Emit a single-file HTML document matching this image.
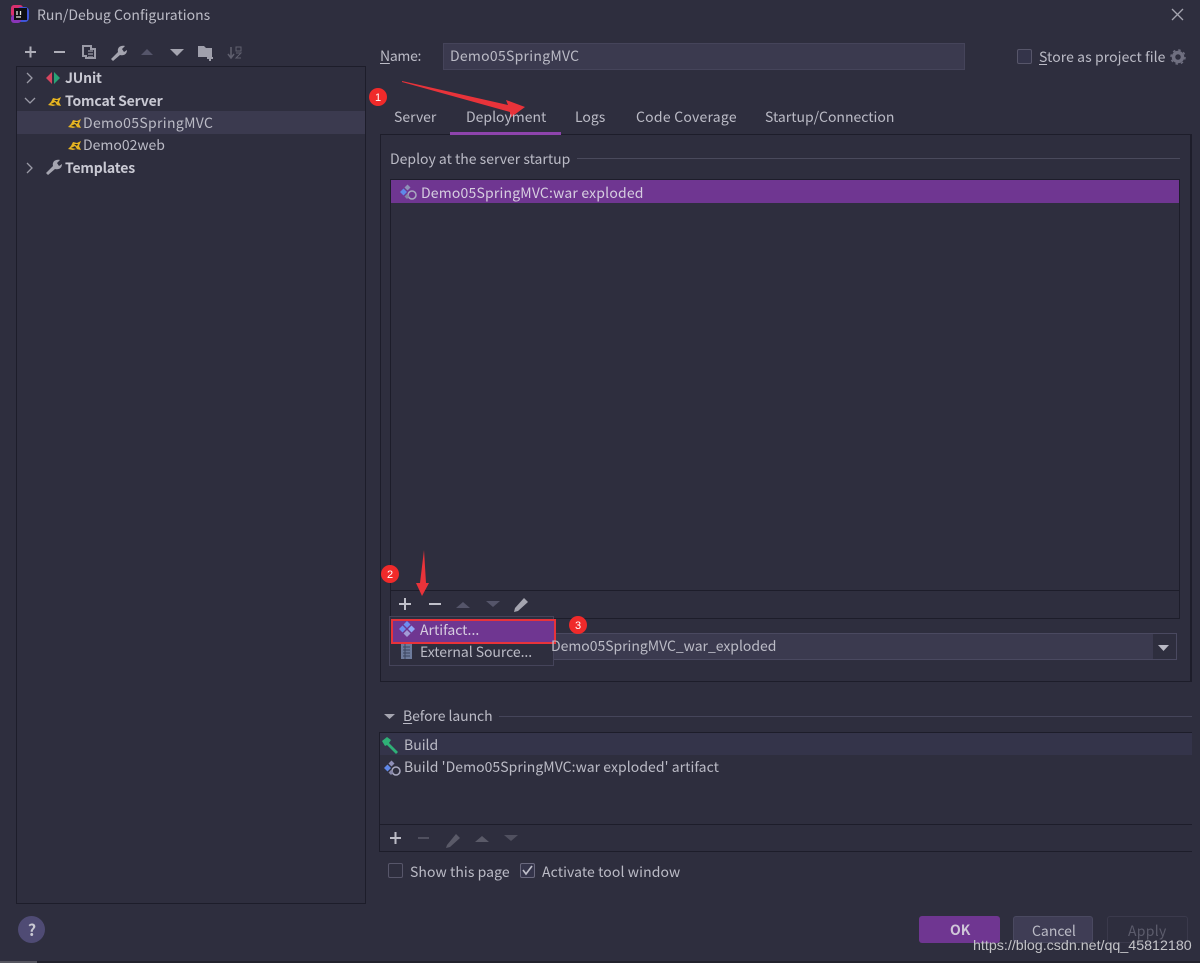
<!DOCTYPE html>
<html><head><meta charset="utf-8"><style>
html,body{margin:0;padding:0;background:#2e2e3e}
#r{position:relative;width:1200px;height:963px;overflow:hidden;background:#2e2e3e;font-family:"Noto Sans CJK SC","Liberation Sans",sans-serif;font-size:14px;color:#bbbbc6;filter:blur(.35px)}
#r div{position:absolute;box-sizing:border-box}
.t{white-space:nowrap;line-height:20px;height:20px}
.b{font-weight:700;color:#c9c9d3;letter-spacing:-.15px}
u{text-underline-offset:2px}
svg{position:absolute;left:0;top:0}
</style></head><body><div id="r">
<div style="left:16px;top:66px;width:350px;height:838px;border:1px solid #1d1d2a"></div>
<div style="left:17px;top:111px;width:348px;height:23px;background:#3b3a4f"></div>
<div style="left:380px;top:134px;width:812px;height:548px;border:1px solid #1d1d2a;border-right:2px solid #1d1d2a"></div>
<div style="left:450px;top:132px;width:111px;height:3px;background:#8e44ad"></div>
<div style="left:443px;top:43px;width:522px;height:27px;background:#3b3a4f;border:1px solid #45445a"></div>
<div style="left:1017px;top:49px;width:15px;height:15px;border:1px solid #57566a;border-radius:2px;background:#34344a"></div>
<div style="left:390px;top:179px;width:790px;height:440px;border:1px solid #1d1d2a"></div>
<div style="left:391px;top:180px;width:788px;height:23px;background:#6f3691"></div>
<div style="left:391px;top:590px;width:788px;height:1px;background:#1d1d2a"></div>
<div style="left:577px;top:158px;width:603px;height:1px;background:#4a4a5c"></div>
<div style="left:540px;top:633px;width:637px;height:27px;background:#3b3a4f;border:1px solid #4a4960"></div>
<div style="left:1153px;top:634px;width:23px;height:25px;background:#2e2e3e"></div>
<div style="left:389px;top:616px;width:165px;height:50px;background:#2e2e3e;border:1px solid #45445a"></div>
<div style="left:391px;top:619px;width:165px;height:25px;background:#6f3691;border:2.500px solid #e8333a"></div>
<div style="left:499px;top:716px;width:693px;height:1px;background:#45455a"></div>
<div style="left:379px;top:732px;width:813px;height:120px;border:1px solid #1d1d2a;border-right:0"></div>
<div style="left:380px;top:733px;width:812px;height:22px;background:#34344a"></div>
<div style="left:380px;top:824px;width:812px;height:1px;background:#1d1d2a"></div>
<div style="left:388px;top:863px;width:15px;height:15px;border:1px solid #57566a;border-radius:2px"></div>
<div style="left:520px;top:863px;width:15px;height:15px;border:1px solid #6a697e;border-radius:2px;background:#34344a"></div>
<div style="left:919px;top:916px;width:81px;height:27px;background:#6f3691;border-radius:3px"></div>
<div style="left:1013px;top:916px;width:80px;height:27px;background:#3f3d55;border:1px solid #4a4960;border-radius:3px"></div>
<div style="left:1107px;top:916px;width:81px;height:27px;border:1px solid #3b3a4c;border-radius:3px"></div>
<div style="left:18px;top:916px;width:27px;height:27px;border-radius:50%;background:#4f4b74"></div>
<div style="left:0;top:961px;width:1200px;height:2px;background:#22222c"></div>
<div style="left:0;top:961px;width:37px;height:2px;background:#55555f"></div>

<svg width="1200" height="963" viewBox="0 0 1200 963">
<defs>
<g id="art"><path d="M0 0l3.500-3.500 3.500 3.500-3.500 3.500z" fill="#5f88e8"/><path d="M4.500-4.500l3-3 3 3-3 3z" fill="#8f8fb8"/><circle cx="12" cy="3" r="4" fill="none" stroke="#a9a9c0" stroke-width="1.500"/><path d="M4.500 4.500l2.500-2.500 2.500 2.500-2.500 2.500z" fill="#8585a8"/></g>
<g id="cat"><path d="M0 8l3-3 2-4 4 1 4-2-2 5 2 4-5-1-3 1z" fill="#e6b422"/><path d="M3 7l6 1-2-3z" fill="#2a2a2a"/><path d="M6 3l4 0-1 2z" fill="#2a2a2a"/></g>
<g id="wr"><path d="M0 13l7-7c-1-4 2-7 7-6l-3 3 2 3 3-2c0 4-3 6-7 5l-7 6z" fill="#a5a5b0"/></g>
</defs>
<!-- app icon -->
<rect x="11" y="5" width="12" height="12" rx="3" fill="#d8306f"/><rect x="17" y="7" width="12" height="15" rx="4" fill="#3f55d8"/><rect x="11" y="15" width="10" height="8" rx="3" fill="#8a35b8"/><rect x="14" y="8" width="13" height="12" fill="#0e0e12"/><path d="M17 11v4M20.500 11v4M16 17h5" stroke="#e4e4e4" stroke-width="1.300"/>
<!-- top toolbar -->
<g stroke="#aeaeb8" stroke-width="2" fill="none"><path d="M25 52h11M30.500 46.500v11M54 52h11"/></g>
<path d="M83 46h8v3h4v9h-9v-2h-3z" fill="none" stroke="#9a9aa6" stroke-width="2"/><path d="M88 51h5M88 54h5M88 57h5" stroke="#9a9aa6" stroke-width="1.200"/>
<use href="#wr" x="111" y="46"/>
<path d="M141 55l6-6 6 6z" fill="#55556a"/><path d="M170 49h14l-7 7z" fill="#a5a5b0"/>
<path d="M198 46h6l2 2h6v9h-14z" fill="#a0a0ac"/><path d="M207 58h6M210 55v6" stroke="#a0a0ac" stroke-width="2"/>
<path d="M231 47v10M228 54l3 4 3-4" stroke="#60606f" fill="none" stroke-width="1.500"/><path d="M236 47h5v4h-5zM236 53h5l-5 5h5" stroke="#60606f" fill="none"/>
<!-- close -->
<path d="M1172 9l11 11M1183 9l-11 11" stroke="#a5a5b0" stroke-width="1.300"/>
<!-- gear -->
<circle cx="1178" cy="57" r="4.500" fill="none" stroke="#6f6f80" stroke-width="3.500"/><circle cx="1178" cy="57" r="7" fill="none" stroke="#6f6f80" stroke-width="1.500" stroke-dasharray="2.500 3"/>
<!-- tree chevrons -->
<g stroke="#9a9aa6" stroke-width="1.300" fill="none"><path d="M27 73l5 5-5 5M25 98l5 5 5-5M27 163l5 5-5 5"/></g>
<path d="M52 72l-6 6 6 6z" fill="#d6455f"/><path d="M54 72l6 6-6 6z" fill="#29a376"/>
<use href="#cat" x="48" y="97"/><use href="#cat" x="68" y="119"/><use href="#cat" x="68" y="141"/>
<use href="#wr" x="46" y="160"/>
<!-- artifact icons -->
<use href="#art" x="400" y="192"/><use href="#art" x="384" y="768"/>
<path d="M399 629l3.500-3.500 3.500 3.500-3.500 3.500z" fill="#6c8df0"/><path d="M403.500 624.500l3.500-3.500 3.500 3.500-3.500 3.500z" fill="#6c8df0"/><path d="M408 629l3.500-3.500 3.500 3.500-3.500 3.500z" fill="#8ea6f5"/><path d="M403.500 633.500l3.500-3.500 3.500 3.500-3.500 3.500z" fill="#a39bd8"/>
<rect x="401" y="644" width="11" height="15" fill="#6d7b9c"/><path d="M405 644v15M403 647h7M403 650h7M403 653h7M403 656h7" stroke="#3c4660"/>
<!-- deploy toolbar -->
<g stroke="#c0c0ca" stroke-width="2" fill="none"><path d="M399 604h12M405 598v12M429 604h12"/></g>
<path d="M456 608l7-6 7 6z" fill="#55556a"/><path d="M486 601h14l-7 6z" fill="#55556a"/>
<path d="M515 608l9-10 4 4-10 9-4 1z" fill="#a5a5b0"/>
<path d="M1158 645h11l-5.500 6z" fill="#b8b8c4"/>
<!-- before launch -->
<path d="M384 714h11l-5.500 5z" fill="#a5a5b0"/>
<path d="M382 741l5-4 4 3-2 3 9 9-2 2-9-9-2 1z" fill="#2fb077"/>
<g stroke="#bcbcc6" stroke-width="2" fill="none"><path d="M390 838h11M395.500 832v12"/></g><path d="M418 838h11" stroke="#50505f" stroke-width="2"/>
<path d="M447 845l9-11 4 4-10 9-4 1z" fill="#5a5a68"/><path d="M475 842l7-6 7 6z" fill="#5a5a68"/><path d="M504 835h14l-7 6z" fill="#50505f"/>
<path d="M523 870l3 4 6-8" stroke="#c0c0ca" stroke-width="1.600" fill="none"/>
<!-- red annotations -->
<path d="M402 81l106 24-2-5 19 7-15 11 0-6-108-30z" fill="#e8333a"/>
<path d="M424 550l2 33 3 0-7 13-6-13 4 0z" fill="#e8333a"/>
<circle cx="378" cy="97" r="9" fill="#f02a2a"/><circle cx="390" cy="574" r="9" fill="#f02a2a"/><circle cx="578" cy="625" r="9" fill="#f02a2a"/>
<text x="378" y="101" font-size="11" fill="#fff" text-anchor="middle" font-family="Liberation Sans">1</text>
<text x="390" y="578" font-size="11" fill="#fff" text-anchor="middle" font-family="Liberation Sans">2</text>
<text x="578" y="629" font-size="11" fill="#fff" text-anchor="middle" font-family="Liberation Sans">3</text>
</svg>

<div class="t" style="left:37px;top:5px">Run/Debug Configurations</div>
<div class="t b" style="left:65px;top:68px">JUnit</div>
<div class="t b" style="left:65px;top:91px">Tomcat Server</div>
<div class="t" style="left:83px;top:113px;letter-spacing:.33px">Demo05SpringMVC</div>
<div class="t" style="left:83px;top:135px">Demo02web</div>
<div class="t b" style="left:65px;top:158px">Templates</div>
<div class="t" style="left:380px;top:46px;letter-spacing:-.3px"><u>N</u>ame:</div>
<div class="t" style="left:450px;top:46px;letter-spacing:.27px">Demo05SpringMVC</div>
<div class="t" style="left:1039px;top:47px;letter-spacing:.08px"><u>S</u>tore as project file</div>
<div class="t" style="left:394px;top:107px">Server</div>
<div class="t" style="left:466px;top:107px">Deployment</div>
<div class="t" style="left:575px;top:107px">Logs</div>
<div class="t" style="left:636px;top:107px;letter-spacing:.24px">Code Coverage</div>
<div class="t" style="left:765px;top:107px">Startup/Connection</div>
<div class="t" style="left:390px;top:149px">Deploy at the server startup</div>
<div class="t" style="left:421px;top:183px;color:#d6cde0;letter-spacing:.18px">Demo05SpringMVC:war exploded</div>
<div class="t" style="left:551px;top:636px;letter-spacing:-.03px">Demo05SpringMVC_war_exploded</div>
<div class="t" style="left:420px;top:620px;color:#d6cde0">Artifact...</div>
<div class="t" style="left:420px;top:642px;letter-spacing:-.05px">External Source...</div>
<div class="t" style="left:403px;top:706px;letter-spacing:-.08px"><u>B</u>efore launch</div>
<div class="t" style="left:404px;top:735px">Build</div>
<div class="t" style="left:404px;top:757px;letter-spacing:.05px">Build 'Demo05SpringMVC:war exploded' artifact</div>
<div class="t" style="left:410px;top:862px;letter-spacing:.07px">Show this page</div>
<div class="t" style="left:542px;top:862px;letter-spacing:.1px">Activate tool window</div>
<div class="t" style="left:25px;top:919px;width:14px;text-align:center;font-weight:700;font-size:16px;color:#c9c9d3">?</div>
<div class="t" style="left:950px;top:920px;font-weight:700;color:#cfc6d8">OK</div>
<div class="t" style="left:1032px;top:921px">Cancel</div>
<div class="t" style="left:1128px;top:921px;color:#5c5c6c;letter-spacing:.3px">Apply</div>
<div class="t" style="left:973px;top:936px;font-family:'Liberation Sans',sans-serif;font-size:14.250px;color:#c4c4c8">https://blog.csdn.net/qq_45812180</div>
</div></body></html>
